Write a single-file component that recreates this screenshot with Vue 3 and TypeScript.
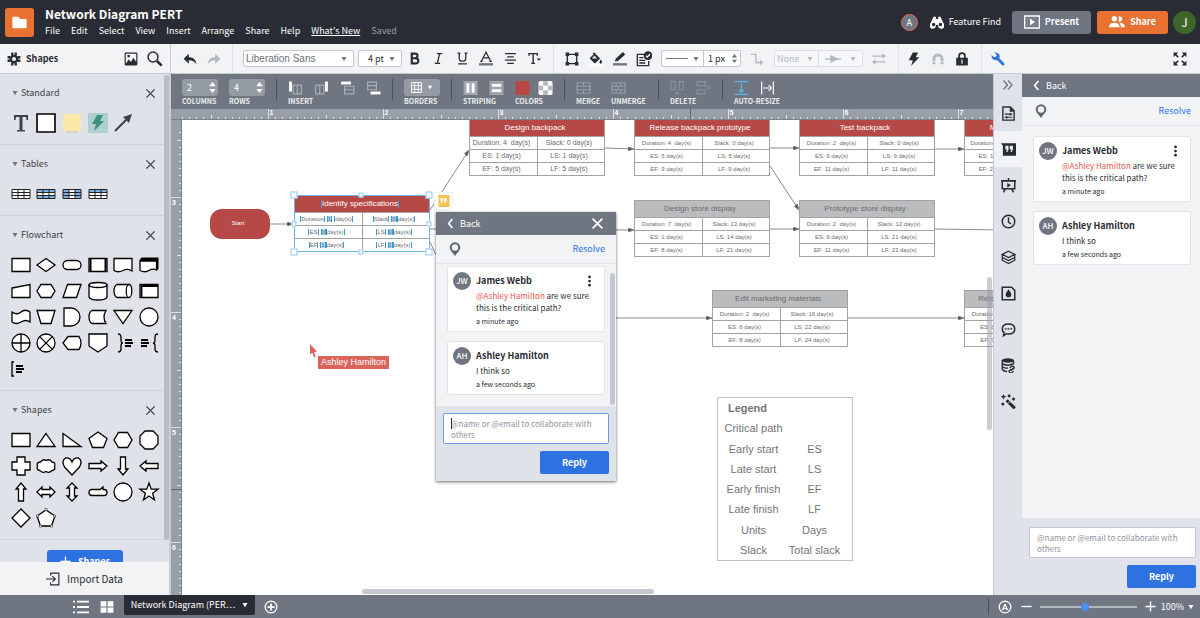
<script setup lang="ts">
import { ref } from 'vue'

interface Cell { parts: string[] }
interface Node { title: string; kind: 'critical' | 'normal'; x: number; y: number; big?: boolean; cells: string[][] }
interface Message { initials: string; name: string; mention?: string; text: string; time: string; menu?: boolean }
interface Tick { pos: number; size: number; label?: string }

const menus = ['File', 'Edit', 'Select', 'View', 'Insert', 'Arrange', 'Share', 'Help']

const icons: Record<string, string> = {
  folder: '<path fill="currentColor" d="M2 5q0-1 1-1h7l3 3h8q1 0 1 1v11q0 1-1 1H3q-1 0-1-1z"/>',
  gear: '<circle cx="12" cy="12" r="5.5" fill="none" stroke="currentColor" stroke-width="4"/><path fill="none" stroke="currentColor" stroke-width="4" d="M9 1v5M15 1v5M9 18v5M15 18v5M1 9h5M1 15h5M18 9h5M18 15h5"/>',
  image: '<path fill="currentColor" fill-rule="evenodd" d="M3 1h18q2 0 2 2v18q0 2-2 2H3q-2 0-2-2V3q0-2 2-2zm0 2v17l5-7 4 4 4-7 5 7V3zM6 5h4v4H6z"/>',
  search: '<circle cx="9" cy="9" r="7.500" fill="none" stroke="currentColor" stroke-width="2.2"/><path fill="none" stroke="currentColor" stroke-width="4" d="m15 15 7 7"/>',
  undo: '<path fill="currentColor" d="M10 3v6c8 0 12 4 13 12-3-5-7-7-13-7v6L1 11.500z"/>',
  redo: '<path fill="currentColor" d="M14 3v6C6 9 2 13 1 21c3-5 7-7 13-7v6l9-8.500z"/>',
  bold: '<path fill="none" stroke="currentColor" stroke-width="4" d="M7 3h6q4.500 0 4.500 4T13 11.500H7h7q5 0 5 4.800T14 21H7zM7 1v22"/>',
  italic: '<path fill="none" stroke="currentColor" stroke-width="2.400" d="M9 3h10M5 21h10M14 3l-4 18"/>',
  underline: '<path fill="none" stroke="currentColor" stroke-width="2.400" d="M3 2h5M16 2h5M6 2v9q0 6 6 6t6-6V2M4 22h16"/>',
  color: '<path fill="none" stroke="currentColor" stroke-width="2.200" d="M4 17 12 1l8 16M7 11h10M2 17h4M18 17h4"/><path fill="#6f7681" d="M0 20h24v4H0z"/>',
  align: '<path fill="none" stroke="currentColor" stroke-width="2.200" d="M2 3h20M6 9h12M2 15h20M6 21h12"/>',
  textmenu: '<path fill="none" stroke="currentColor" stroke-width="2.600" d="M2 7V3h15v4M9.500 3v18M6 21h7"/><path fill="currentColor" d="M16 12h8l-4 4z"/>',
  shapebox: '<path fill="none" stroke="currentColor" stroke-width="2.400" d="M4 4h16v16H4z"/><path fill="currentColor" d="M1 1h6v6H1zM17 1h6v6h-6zM1 17h6v6H1zM17 17h6v6h-6z"/>',
  bucket: '<path fill="currentColor" d="m9 1 10 10-8 8q-1 1-2 0L2 12q-1-1 0-2l6-6-2-2zM20 13q5 6 0 7-4-1 0-7z"/><path fill="#f2f3f5" d="m9 6 5 5H5z"/><path fill="#fff" d="M1 21h22v3H1z"/>',
  pen: '<path fill="currentColor" d="m3 17 2-5L17 1l4 4L9 16z"/><path fill="#6f7681" d="M0 20h24v4H0z"/>',
  listcheck: '<path fill="none" stroke="currentColor" stroke-width="2" d="M12 5H2v17h17v-7M5 10h6M5 14h9M5 18h9"/><circle cx="18" cy="7" r="6.500" fill="currentColor"/><path fill="none" stroke="#fff" stroke-width="2" d="m15 7 2 2 4-4"/>',
  elbow: '<path fill="none" stroke="currentColor" stroke-width="2.400" d="M1 4h9v14h8"/><path fill="currentColor" d="m17 13 6 5-6 5z"/>',
  swap: '<path fill="none" stroke="currentColor" stroke-width="2" d="M1 7h20M3 17h20"/><path fill="currentColor" d="m18 2 6 5-6 5zM6 12l-6 5 6 5z"/>',
  bolt: '<path fill="currentColor" d="M10 1h9l-4 8h6L7 24l3-10H3z"/>',
  magnet: '<path fill="none" stroke="currentColor" stroke-width="5" d="M5 21v-9a7 7 0 0 1 14 0v9"/><path stroke="#f2f3f5" stroke-width="1.500" d="M1 16.500h8M15 16.500h8"/>',
  lock: '<path fill="none" stroke="currentColor" stroke-width="3" d="M7 11V7q0-5 5-5t5 5v4"/><path fill="currentColor" fill-rule="evenodd" d="M2 10h20v13H2zm9 3v7h2v-7z"/>',
  wrench: '<path fill="none" stroke="currentColor" stroke-width="5" stroke-linecap="round" d="m10 10 10.500 10.500"/><path fill="currentColor" d="M1 5 5 9l4-1 1-3L6 1q5-1 8 3 2 4-1 8-4 4-9 1-4-3-3-8z"/>',
  expand: '<path fill="currentColor" d="M1 1h8L6 4l4 4-2 2-4-4-3 3zM23 1v8l-3-3-4 4-2-2 4-4-3-3zM1 23v-8l3 3 4-4 2 2-4 4 3 3zM23 23h-8l3-3-4-4 2-2 4 4 3-3z"/>',
  binoculars: '<path fill="currentColor" fill-rule="evenodd" d="M6 3h4v4h4V3h4l5 11a5.500 5.500 0 1 1-9 3h-4a5.500 5.500 0 1 1-9-3zm.2 10.200a3 3 0 1 0 0 6 3 3 0 0 0 0-6zm11.600 0a3 3 0 1 0 0 6 3 3 0 0 0 0-6z"/>',
  present: '<path fill="none" stroke="currentColor" stroke-width="2" d="M1 3h22v18H1z"/><path fill="none" stroke="currentColor" stroke-width="1" d="M5 7h14v10H5z" opacity=".3"/><path fill="currentColor" d="m9 7 8 5-8 5z"/>',
  people: '<circle cx="8" cy="7" r="4" fill="currentColor"/><path fill="currentColor" d="M0 20q0-7 8-7t8 7zM14 4a4 4 0 1 1 0 7q2-3 0-7zM17 13q7 1 7 7h-6q0-5-3-7z"/>',
  close: '<path fill="none" stroke="currentColor" stroke-width="3" d="m3 3 18 18M21 3 3 21"/>',
  back: '<path fill="none" stroke="currentColor" stroke-width="3.500" d="m16 2-8 10 8 10"/>',
  pin: '<path fill="currentColor" fill-rule="evenodd" d="M12 24C8 18 3 14 3 9.500a9 9 0 0 1 18 0C21 14 16 18 12 24zm0-20a5.500 5.500 0 1 0 0 11 5.500 5.500 0 0 0 0-11z"/>',
  dots: '<circle cx="12" cy="3" r="3" fill="currentColor"/><circle cx="12" cy="12" r="3" fill="currentColor"/><circle cx="12" cy="21" r="3" fill="currentColor"/>',
  chevrons: '<path fill="none" stroke="currentColor" stroke-width="2.600" d="m3 3 8 9-8 9M12 3l8 9-8 9"/>',
  page: '<path fill="none" stroke="currentColor" stroke-width="2.200" d="M3 1.500h12l6 6v15H3z"/><path fill="none" stroke="currentColor" stroke-width="1.800" d="M6 13h12M6 18h12"/><path fill="currentColor" d="M14 2v7h7zM14 11h2v4h-2zM8 16h2v4H8z"/>',
  quotes: '<path fill="currentColor" fill-rule="evenodd" d="M0 2h24v20H3V6zm7 4v6h3l-2 4h2l2-4V6zm7 0v6h3l-2 4h2l2-4V6z"/>',
  slides: '<path fill="none" stroke="currentColor" stroke-width="2.400" d="M2 4v13h20V4M7 17l-3 6M17 17l3 6M12 0v4"/><path fill="currentColor" d="M0 3h24v3H0zM10 8l6 3.500-6 3.500z"/>',
  clock: '<circle cx="12" cy="12" r="10" fill="none" stroke="currentColor" stroke-width="2.400"/><path fill="none" stroke="currentColor" stroke-width="2.400" d="M12 5v8l4 3"/>',
  layers: '<path fill="none" stroke="currentColor" stroke-width="2" d="m12 2 10 5-10 5L2 7zM2 12l10 5 10-5M2 16.500l10 5 10-5M2 7v5M22 7v5M2 12v5M22 12v5"/>',
  theme: '<path fill="none" stroke="currentColor" stroke-width="2.400" d="M2 2h15l5 5v15H2z"/><path fill="currentColor" d="M12 5c2 4 4.500 5 4.500 8.500a4.500 4.500 0 0 1-9 0C7.500 10 10 9 12 5z"/>',
  chat: '<path fill="none" stroke="currentColor" stroke-width="2.400" d="M12 3c6 0 10 3 10 8s-4 8-10 8q-2 0-3-.5L4 22l1-5q-3-2-3-6c0-5 4-8 10-8z"/><path fill="currentColor" d="M6 10h3v2H6zM10.500 10h3v2h-3zM15 10h3v2h-3z"/>',
  data: '<ellipse cx="11" cy="4" rx="10" ry="3.500" fill="currentColor"/><path fill="none" stroke="currentColor" stroke-width="2.200" d="M2 4v14q3 4 8 3.500M20 4v6M2 9q8 5 18 0M2 14q5 3 9 2"/><path fill="none" stroke="currentColor" stroke-width="2.200" d="m16 18-3 3a3 3 0 0 0 4 3l3-3M19 18l2-2a3 3 0 0 0-4-3l-3 3M16 20l4-4"/>',
  wand: '<path stroke="currentColor" stroke-width="5" d="m9 10 13 13"/><path fill="currentColor" d="m4 0 1.500 3L9 4 5.500 5.500 4 9 2.500 5.500-1 4l3.500-1zM13 0l3 3-3 3-3-3zM20 5l3 3-3 3-3-3zM3 13l3 3-3 3-3-3z"/><path stroke="#dfe2e8" stroke-width="1.500" d="m14 12-3 3"/>',
  import: '<path fill="none" stroke="currentColor" stroke-width="2" d="M8 6V2h14v20H8v-4M0 12h15M11 7l5 5-5 5"/>',
  list: '<path fill="none" stroke="currentColor" stroke-width="2.800" d="M0 4h3M6 4h18M0 12h3M6 12h18M0 20h3M6 20h18"/>',
  tiles: '<path fill="currentColor" d="M1 2h10v9H1zM13 2h10v9H13zM1 13h10v9H1zM13 13h10v9H13z"/>',
  addpage: '<circle cx="12" cy="12" r="10" fill="none" stroke="currentColor" stroke-width="2.200"/><path fill="none" stroke="currentColor" stroke-width="3" d="M12 6v12M6 12h12"/>',
  navigator: '<circle cx="12" cy="12" r="10" fill="none" stroke="currentColor" stroke-width="2.200"/><path fill="currentColor" fill-rule="evenodd" d="m12 5 6 13-6-3-6 3zm0 5-2 4 2-1 2 1z"/>',
  minus: '<path fill="none" stroke="currentColor" stroke-width="3" d="M1 12h22"/>',
  plus: '<path fill="none" stroke="currentColor" stroke-width="3" d="M12 1v22M1 12h22"/>',
  caret: '<path fill="currentColor" d="M2 4h20L12 21z"/>',
  spin: '<path fill="currentColor" d="M12 0l7 9H5zM12 24l7-9H5z"/>',
  quoteBadge: '<path fill="#f3c24f" d="M0 0h24v24H2V4z"/><path fill="#fff" d="M6 6h5v6l-2 5H7l1-4H6zM13 6h5v6l-2 5h-2l1-4h-2z"/>',
  arrowline: '<path fill="none" stroke="currentColor" stroke-width="2" d="M0 12h24"/><path fill="currentColor" d="m8 6 13 6-13 6z"/>',
  insertLeft: '<path fill="#fff" d="M1 1h5v17H1z"/><path fill="none" stroke="#a9aeb7" stroke-width="2" d="M8 7h14v15H8zM15 7v15"/>',
  insertRight: '<path fill="#fff" d="M18 1h5v17h-5z"/><path fill="none" stroke="#a9aeb7" stroke-width="2" d="M2 7h14v15H2zM9 7v15"/>',
  insertTop: '<path fill="#fff" d="M1 1h17v5H1z"/><path fill="none" stroke="#a9aeb7" stroke-width="2" d="M7 9h16v13H7zM7 15h16"/>',
  insertBottom: '<path fill="#fff" d="M7 18h17v5H7z"/><path fill="none" stroke="#a9aeb7" stroke-width="2" d="M2 2h15v13H2zM2 8h15"/>',
  grid: '<path fill="none" stroke="#fff" stroke-width="2" d="M1 1h22v22H1zM1 8h22M1 16h22M8 1v22M16 1v22"/>',
  stripeCol: '<path fill="#a0a5af" d="M0 0h24v24H0z"/><path fill="#fff" d="M5 4h5v16H5zM14 4h5v16h-5z"/>',
  stripeRow: '<path fill="#a0a5af" d="M0 0h24v24H0z"/><path fill="#fff" d="M4 5h16v5H4zM4 14h16v5H4z"/>',
  swatch: '<rect width="24" height="24" rx="3" fill="#b94643"/>',
  checker: '<rect width="24" height="24" rx="3" fill="#fff"/><path fill="#b4b8bf" d="M8 0h8v8H8zM0 8h8v8H0zM16 8h8v8h-8zM8 16h8v8H8z"/>',
  merge: '<path fill="none" stroke="#989da7" stroke-width="2" d="M1 3h22v18H1zM1 9h22M1 15h22M12 3v6M12 15v6"/>',
  unmerge: '<path fill="none" stroke="#989da7" stroke-width="2" d="M1 3h22v18H1zM1 9h22M1 15h22M8 3v6M16 3v6M8 15v6M16 15v6M12 9v6"/>',
  deleteCol: '<path fill="none" stroke="#8c929d" stroke-width="2" d="M1 1h7v14H1zM15 1h7v14h-7zM9 18l5 5M14 18l-5 5"/>',
  deleteRow: '<path fill="none" stroke="#8c929d" stroke-width="2" d="M1 1h14v7H1zM1 15h14v7H1zM18 9l5 5M23 9l-5 5"/>',
  fitHeight: '<path fill="none" stroke="#5bb5f0" stroke-width="2" d="M0 1h24M0 23h24M12 3v16M8 15l4 4 4-4"/>',
  fitWidth: '<path fill="none" stroke="#fff" stroke-width="2" d="M2 1v22M22 1v22M4 12h15M14 7l5 5-5 5"/>',
}

const cell = (d: string) => `<path d="${d}"/>`
const lines = (x: number) => `<path fill="none" stroke-width="1.800" d="M${x} -3h7M${x} 0h8M${x} 3h6"/>`
const standard = [
  '<path fill="#3d4148" stroke="none" d="M-7-8H7v5H5.500L5-6H1.500V7H4v1.500h-8V7h2.500V-6H-5l-.5 3H-7z"/>',
  '<path stroke-width="1.600" d="M-9-9H9V9H-9z"/>',
  '<path fill="#d5cdb2" stroke="none" d="M-6 7H6v2.500H-6z"/><path fill="#fde8ab" stroke="none" d="M-9-9H9V8H-9z"/>',
  '<path fill="#afd0cc" stroke="none" d="M-10-10h20v20h-20z"/><path fill="#3b8f83" stroke="none" d="M-1-8h6L2-2h4L-4 8l2-7h-4z"/>',
  '<path fill="none" stroke="#3d4148" stroke-width="2" d="M-8 8 4-4"/><path fill="#3d4148" stroke="none" d="M9-9 6 0 0-6z"/>',
]
const tableGrid = '<path fill="none" stroke="#222" stroke-width="1" d="M-9-4.500H9v9H-9zM-9-1.500H9M-9 1.500H9M-3-4.500v9M3-4.500v9"/>'
const tableBg = '<path stroke="none" d="M-9-4.500H9v9H-9z"/>'
const tables = [
  tableBg + tableGrid,
  tableBg + '<path fill="#83b0e2" stroke="none" d="M-9-4.500H9v3H-9zM-9 1.500H9v3H-9z"/>' + tableGrid,
  tableBg + '<path fill="#83b0e2" stroke="none" d="M-9-4.500h6v9h-6zM3-4.500h6v9H3z"/>' + tableGrid,
  tableBg + '<path fill="#83b0e2" stroke="none" d="M-9-4.500H9v3H-9z"/>' + tableGrid,
]
const flowchart = [
  cell('M-9-6.500H9v13H-9z'),
  cell('M-9 0 0-6.500 9 0 0 6.500z'),
  '<rect x="-9" y="-4.500" width="18" height="9" rx="4.500"/>',
  '<path d="M-9-6.500H9v13H-9z"/><path stroke-width="2" d="M-7.500-6v12M7.500-6v12"/>',
  cell('M-9-6.500H9V6Q5 3 0 5.500T-9 5.500z'),
  '<path fill="#000" stroke="none" d="M-9.500-5l2-2.500h17V4l-2 1.500z"/><path d="M-9-4H7.500V5Q4 3 0 5.500T-9 5.500z"/>',
  cell('M-9-3 9-6.500v13H-9z'),
  cell('M-5-6.500H5L9 0 5 6.500H-5L-9 0z'),
  cell('M-4.500-6.500H9l-4.500 13H-9z'),
  '<path d="M-9-6V6Q-8 9 0 9T9 6V-6z"/><ellipse cy="-6" rx="9" ry="2.500"/>',
  '<path d="M6-6.500H-6Q-9-5-9 0t3 6.500H6z"/><ellipse cx="6" rx="2.800" ry="6.500"/>',
  '<path d="M-9-6.500H9v13H-9z"/><path fill="none" stroke-width="1.800" d="M-7.500 6V-5H9"/>',
  cell('M-9-5q5 3.500 9 0t9 0V5Q5 2 0 5t-9 0z'),
  cell('M-9-6.500H9l-4 13H-5z'),
  cell('M-8-9h7a9 9 0 0 1 0 18h-7z'),
  cell('M-6-6.500H8q-4 6.500 0 13H-6Q-9 5-9 0t3-6.500z'),
  cell('M-9-6.500H9L0 6.500z'),
  '<circle r="9"/>',
  '<circle r="9"/><path d="M-9 0H9M0-9V9"/>',
  '<circle r="9"/><path d="m-6.400-6.400 12.800 12.800M6.400-6.400-6.400 6.400"/>',
  cell('M-4-6.500H7q4 6.500 0 13H-4L-9 0z'),
  cell('M-9-9H9V3L0 9-9 3z'),
  '<path fill="none" d="M-5-9q3 0 3 3v3q0 3 2 3-2 0-2 3v3q0 3-3 3"/>' + lines(2),
  lines(-8) + '<path fill="none" d="M9-9Q6-9 6-6v3q0 3-2 3 2 0 2 3v3q0 3 3 3"/>',
  '<path fill="none" d="M-7-7h-2V7h2"/>' + lines(-5),
]
const shapes = [
  cell('M-9-6.500H9v13H-9z'),
  cell('M0-6.500 9 6.500H-9z'),
  cell('M-9-6.500 9 6.500H-9z'),
  cell('M0-8 9-1.500 5.500 7.500h-11L-9-1.500z'),
  cell('M-4.500-7.500h9L9 0 4.500 7.500h-9L-9 0z'),
  cell('M-4-9h8l5 5v8L4 9h-8l-5-5v-8z'),
  cell('M-4-9h8v5h5v8H4v5h-8V4h-5v-8h5z'),
  cell('M-5.500-4Q-3-7.500 0-5.500 4-7.500 6-4q4 .5 2.500 4Q10 4 6 4.500 3 7.500 0 5.500q-4 2-6-1Q-10 4-8.500 0-10-3.500-5.500-4z'),
  cell('M0 9-7.500 1q-3.500-6 1-9 4.500-1 6.500 4 2-5 6.500-4 4.500 3 1 9z'),
  cell('M-9-2.500H3V-5l6 5-6 5V2.500H-9z'),
  cell('M-2.500-9h5V3H5L0 9l-5-6h2.500z'),
  cell('M9-2.500H-3V-5l-6 5 6 5V2.500H9z'),
  cell('M-2.500 9h5V-3H5L0-9l-5 6h2.500z'),
  cell('M-9 0-4-5v2.500h8V-5L9 0 4 5V2.500h-8V5z'),
  cell('M0-9 5-4H2.500v8H5L0 9l-5-5h2.500v-8H-5z'),
  cell('M-6-2.500H2L5-5v2.500h1q3 0 3 3t-3 3H-6q-3 0-3-3t3-3z'),
  '<circle r="9"/>',
  cell('M0-9l2.200 6.200H9L3.600 1.200 5.500 8 0 4-5.500 8l1.900-6.800L-9-2.800h6.800z'),
  cell('M0-9 9 0 0 9-9 0z'),
  '<path d="M0-8 9-2 5.500 8h-11L-9-2z"/><path stroke="#555" stroke-width=".8" d="M-1-9.500h2v2h-2zM7.500-3h2v2h-2zM-9.500-3h2v2h-2zM-6.500 7h2v2h-2zM4.500 7h2v2h-2z"/>',
]
const sections = [
  { name: 'Standard', items: standard },
  { name: 'Tables', items: tables },
  { name: 'Flowchart', items: flowchart },
  { name: 'Shapes', items: shapes },
]

const make = (a: string[]): string[][] => [[a[0], a[1]], [a[2], a[3]], [a[4], a[5]]]
const nodes: Node[] = [
  { title: 'Design backpack', kind: 'critical', x: 287, y: -1, big: true, cells: make(['Duration: 4 \u00a0day(s)', 'Slack: 0 day(s)', 'ES: 1 day(s)', 'LS: 1 day(s)', 'EF: 5 day(s)', 'LF: 5 day(s)']) },
  { title: 'Release backpack prototype', kind: 'critical', x: 452, y: -1, cells: make(['Duration: 4 \u00a0day(s)', 'Slack: 0 day(s)', 'ES: 5 day(s)', 'LS: 5 day(s)', 'EF: 9 day(s)', 'LF: 9 day(s)']) },
  { title: 'Test backpack', kind: 'critical', x: 617, y: -1, cells: make(['Duration: 2 \u00a0day(s)', 'Slack: 0 day(s)', 'ES: 9 day(s)', 'LS: 9 day(s)', 'EF: 11 day(s)', 'LF: 11 day(s)']) },
  { title: 'Manufacture backpack', kind: 'critical', x: 782, y: -1, cells: make(['Duration: 14 \u00a0day(s)', 'Slack: 0 day(s)', 'ES: 11 day(s)', 'LS: 11 day(s)', 'EF: 25 day(s)', 'LF: 25 day(s)']) },
  { title: 'Design store display', kind: 'normal', x: 452, y: 80, cells: make(['Duration: 7 \u00a0day(s)', 'Slack: 13 day(s)', 'ES: 1 day(s)', 'LS: 14 day(s)', 'EF: 8 day(s)', 'LF: 21 day(s)']) },
  { title: 'Prototype store display', kind: 'normal', x: 617, y: 80, cells: make(['Duration: 2 \u00a0day(s)', 'Slack: 12 day(s)', 'ES: 9 day(s)', 'LS: 21 day(s)', 'EF: 11 day(s)', 'LF: 23 day(s)']) },
  { title: 'Edit marketing materials', kind: 'normal', x: 530, y: 170, cells: make(['Duration: 2 \u00a0day(s)', 'Slack: 16 day(s)', 'ES: 6 day(s)', 'LS: 22 day(s)', 'EF: 8 day(s)', 'LF: 24 day(s)']) },
  { title: 'Release marketing campaign', kind: 'normal', x: 782, y: 170, cells: make(['Duration: 1 \u00a0day(s)', 'Slack: 16 day(s)', 'ES: 8 day(s)', 'LS: 24 day(s)', 'EF: 9 day(s)', 'LF: 25 day(s)']) },
]
const selected: Cell[][] = [
  [{ parts: ['Duration', '1', 'day(s)'] }, { parts: ['Slack', '0', 'day(s)'] }],
  [{ parts: ['ES', '0', 'day(s)'] }, { parts: ['LS', '0', 'day(s)'] }],
  [{ parts: ['EF', '1', 'day(s)'] }, { parts: ['LF', '1', 'day(s)'] }],
]
const links = [
  'M88 104H111', 'M248 90 287 30', 'M248 109 452 110', 'M248 122 254 135', 'M434 198H530',
  'M423 28 452 29', 'M588 28H617', 'M588 46 617 90', 'M588 109H617', 'M753 29H782', 'M753 109 820 110', 'M666 198H782',
]
const handles = [
  [0, 0, 7], [135, 0, 7], [0, 57, 7], [135, 57, 7],
  [67, 0, 5], [67, 57, 5], [0, 29, 5], [135, 29, 5],
]
const legend = [
  ['Critical path', ''], ['Early start', 'ES'], ['Late start', 'LS'], ['Early finish', 'EF'],
  ['Late finish', 'LF'], ['Units', 'Days'], ['Slack', 'Total slack'],
]

function ruler(first: number, start: number, count: number): Tick[] {
  const out: Tick[] = []
  for (let k = -16; k < count * 16; k++) {
    const major = k % 16 === 0
    const pos = start + (k * 115) / 16
    if (pos < 8) continue
    out.push({ pos: Math.round(pos) + 0.5, size: major ? 11 : k % 8 === 0 ? 5 : 3, label: major ? String(first + k / 16) : undefined })
  }
  return out
}
const across = ruler(1, 97, 16)
const down = ruler(3, 77, 12)

const messages: Message[] = [
  { initials: 'JW', name: 'James Webb', mention: '@Ashley Hamilton', text: ' are we sure this is the critical path?', time: 'a minute ago', menu: true },
  { initials: 'AH', name: 'Ashley Hamilton', text: 'I think so', time: 'a few seconds ago' },
]
const dock = ['page', 'quotes', 'slides', 'clock', 'layers', 'theme', 'chat', 'data', 'wand']
const placeholder = '@name or @email to collaborate with others'

const popupOpen = ref(true)
const popupDraft = ref('')
const panelDraft = ref('')
const columns = ref(2)
const rows = ref(4)
const lineWidth = ref('1 px')
const zoom = ref(46)
</script>

<template>
  <div class="app">
    <header class="top">
      <div class="logo"><svg viewBox="0 0 24 24" v-html="icons.folder" /></div>
      <div class="heading">
        <h1>Network Diagram PERT</h1>
        <nav class="menus">
          <button v-for="m in menus" :key="m" type="button">{{ m }}</button>
          <a href="#whats-new">What's New</a>
          <span class="saved">Saved</span>
        </nav>
      </div>
      <span class="collab">A</span>
      <button class="find" type="button"><svg viewBox="0 0 24 24" v-html="icons.binoculars" />Feature Find</button>
      <button class="action present" type="button"><svg viewBox="0 0 24 24" v-html="icons.present" />Present</button>
      <button class="action share" type="button"><svg viewBox="0 0 24 24" v-html="icons.people" />Share</button>
      <button class="me" type="button">J</button>
    </header>

    <div class="toolbar">
      <div class="group shapes-head">
        <svg viewBox="0 0 24 24" v-html="icons.gear" />
        <h2>Shapes</h2>
        <button type="button" class="slot" aria-label="Images"><svg viewBox="0 0 24 24" v-html="icons.image" /></button>
        <button type="button" class="slot" aria-label="Search shapes"><svg class="i16" viewBox="0 0 24 24" v-html="icons.search" /></button>
      </div>
      <div class="group history">
        <button type="button" class="slot" aria-label="Undo"><svg viewBox="0 0 24 24" v-html="icons.undo" /></button>
        <button type="button" class="slot off" aria-label="Redo"><svg viewBox="0 0 24 24" v-html="icons.redo" /></button>
      </div>
      <div class="group text-tools">
        <label class="pick font"><select aria-label="Font"><option>Liberation Sans</option></select><svg viewBox="0 0 24 24" v-html="icons.caret" /></label>
        <label class="pick size"><select aria-label="Font size"><option>4 pt</option></select><svg viewBox="0 0 24 24" v-html="icons.caret" /></label>
        <div class="slots">
          <button v-for="n in ['bold', 'italic', 'underline', 'color', 'align', 'textmenu']" :key="n" type="button" class="slot" :class="n" :aria-label="n"><svg viewBox="0 0 24 24" v-html="icons[n]" /></button>
        </div>
      </div>
      <div class="group line-tools">
        <div class="slots">
          <button v-for="n in ['shapebox', 'bucket', 'pen', 'listcheck']" :key="n" type="button" class="slot" :class="n" :aria-label="n"><svg viewBox="0 0 24 24" v-html="icons[n]" /></button>
        </div>
        <div class="joined">
          <button type="button" class="line-style" aria-label="Line style"><i /><svg viewBox="0 0 24 24" v-html="icons.caret" /></button>
          <label class="stepper"><input v-model="lineWidth" aria-label="Line width" /><svg viewBox="0 0 24 24" v-html="icons.spin" /></label>
        </div>
        <button type="button" class="slot off" aria-label="Line shape"><svg viewBox="0 0 24 24" v-html="icons.elbow" /></button>
        <div class="joined off ends">
          <label class="pick none"><select disabled aria-label="Line start"><option>None</option></select><svg viewBox="0 0 24 24" v-html="icons.caret" /></label>
          <button type="button" class="line-end" disabled aria-label="Line end"><svg class="i16" viewBox="0 0 24 24" v-html="icons.arrowline" /><svg viewBox="0 0 24 24" v-html="icons.caret" /></button>
        </div>
        <button type="button" class="slot off" aria-label="Swap ends"><svg viewBox="0 0 24 24" v-html="icons.swap" /></button>
      </div>
      <div class="group lock-tools">
        <button type="button" class="slot" aria-label="Actions"><svg viewBox="0 0 24 24" v-html="icons.bolt" /></button>
        <button type="button" class="slot off" aria-label="Magnetize"><svg viewBox="0 0 24 24" v-html="icons.magnet" /></button>
        <button type="button" class="slot" aria-label="Lock"><svg viewBox="0 0 24 24" v-html="icons.lock" /></button>
      </div>
      <div class="group wrench-tools">
        <button type="button" class="slot wrench" aria-label="Manage"><svg viewBox="0 0 24 24" v-html="icons.wrench" /></button>
        <button type="button" class="slot" aria-label="Full screen"><svg viewBox="0 0 24 24" v-html="icons.expand" /></button>
      </div>
    </div>

    <main class="work">
      <aside class="library">
        <div class="library-list">
          <section v-for="s in sections" :key="s.name">
            <header>
              <svg class="fold" viewBox="0 0 24 24" v-html="icons.caret" />
              <h3>{{ s.name }}</h3>
              <button type="button" :aria-label="'Close ' + s.name"><svg viewBox="0 0 24 24" v-html="icons.close" /></button>
            </header>
            <div class="shape-grid">
              <svg v-for="(shape, i) in s.items" :key="i" viewBox="-10 -10 20 20" v-html="shape" />
            </div>
          </section>
          <button type="button" class="more"><svg viewBox="0 0 24 24" v-html="icons.plus" />Shapes</button>
          <i class="library-bar" />
        </div>
        <button type="button" class="import"><svg viewBox="0 0 24 24" v-html="icons.import" />Import Data</button>
      </aside>

      <section class="stage">
        <div class="table-tools">
          <div class="tool">
            <label class="count"><input v-model="columns" aria-label="Columns" /><svg viewBox="0 0 24 24" v-html="icons.spin" /></label>
            <span>COLUMNS</span>
          </div>
          <div class="tool">
            <label class="count"><input v-model="rows" aria-label="Rows" /><svg viewBox="0 0 24 24" v-html="icons.spin" /></label>
            <span>ROWS</span>
          </div>
          <i class="bar" />
          <div class="tool">
            <div class="set"><svg v-for="n in ['insertLeft', 'insertRight', 'insertTop', 'insertBottom']" :key="n" viewBox="0 0 24 24" v-html="icons[n]" /></div>
            <span>INSERT</span>
          </div>
          <i class="bar" />
          <div class="tool">
            <button type="button" class="count borders" aria-label="Borders"><svg viewBox="0 0 24 24" v-html="icons.grid" /><svg class="tiny" viewBox="0 0 24 24" v-html="icons.caret" /></button>
            <span>BORDERS</span>
          </div>
          <i class="bar" />
          <div class="tool">
            <div class="set"><svg v-for="n in ['stripeCol', 'stripeRow']" :key="n" viewBox="0 0 24 24" v-html="icons[n]" /></div>
            <span>STRIPING</span>
          </div>
          <div class="tool near">
            <div class="set"><svg v-for="n in ['swatch', 'checker']" :key="n" viewBox="0 0 24 24" v-html="icons[n]" /></div>
            <span>COLORS</span>
          </div>
          <i class="bar" />
          <div class="tool narrow">
            <div class="set"><svg viewBox="0 0 24 24" v-html="icons.merge" /></div>
            <span>MERGE</span>
          </div>
          <div class="tool wide">
            <div class="set"><svg viewBox="0 0 24 24" v-html="icons.unmerge" /></div>
            <span>UNMERGE</span>
          </div>
          <i class="bar" />
          <div class="tool">
            <div class="set"><svg v-for="n in ['deleteCol', 'deleteRow']" :key="n" viewBox="0 0 24 24" v-html="icons[n]" /></div>
            <span>DELETE</span>
          </div>
          <i class="bar" />
          <div class="tool">
            <div class="set"><svg v-for="n in ['fitHeight', 'fitWidth']" :key="n" viewBox="0 0 24 24" v-html="icons[n]" /></div>
            <span>AUTO-RESIZE</span>
          </div>
        </div>

        <svg class="ruler-x">
          <g v-for="t in across" :key="t.pos">
            <line :x1="t.pos" :x2="t.pos" :y1="11 - t.size" y2="11" />
            <text v-if="t.label" :x="t.pos + 1" y="6">{{ t.label }}</text>
          </g>
          <line class="mark" x1="519.500" x2="519.500" y1="0" y2="11" />
        </svg>

        <div class="sheet">
          <svg class="ruler-y">
            <g v-for="t in down" :key="t.pos">
              <line :y1="t.pos" :y2="t.pos" :x1="11 - t.size" x2="11" />
              <text v-if="t.label" x="1" :y="t.pos + 7">{{ t.label }}</text>
            </g>
            <line class="mark" y1="369.500" y2="369.500" x1="0" x2="11" />
          </svg>

          <div class="canvas">
            <svg class="links">
              <defs>
                <marker id="tip" markerWidth="6" markerHeight="4" refX="6" refY="2" orient="auto" markerUnits="userSpaceOnUse">
                  <path d="M0 0 6 2 0 4z" fill="#4a4a4a" />
                </marker>
              </defs>
              <path v-for="(l, i) in links" :key="i" :d="l" :marker-end="i === 3 ? undefined : 'url(#tip)'" />
            </svg>

            <div class="start">Start</div>

            <table v-for="n in nodes" :key="n.title" class="node" :class="[n.kind, { big: n.big }]" :style="{ left: n.x + 'px', top: n.y + 'px' }">
              <thead><tr><th colspan="2">{{ n.title }}</th></tr></thead>
              <tbody>
                <tr v-for="(r, i) in n.cells" :key="i"><td v-for="c in r" :key="c">{{ c }}</td></tr>
              </tbody>
            </table>

            <div class="picked">
              <table class="node critical">
                <thead><tr><th colspan="2"><span class="token">Identify specifications</span></th></tr></thead>
                <tbody>
                  <tr v-for="(r, i) in selected" :key="i">
                    <td v-for="(c, j) in r" :key="j"><span v-for="(p, k) in c.parts" :key="k" class="token" :class="{ value: k === 1, gap: k === 1 || (i === 0 && j === 0 && k > 0) }">{{ p }}</span></td>
                  </tr>
                </tbody>
              </table>
              <i v-for="(h, i) in handles" :key="i" class="handle" :style="{ left: h[0] + 'px', top: h[1] + 'px', width: h[2] + 'px', height: h[2] + 'px' }" />
            </div>

            <div class="note-badge"><svg viewBox="0 0 24 24" v-html="icons.quoteBadge" /></div>

            <div class="pointer">
              <svg viewBox="0 0 12 24"><path d="M0 0v18l4-3 3 8 3-1-3-8 5-1z" fill="#d9645c" /></svg>
              <span>Ashley Hamilton</span>
            </div>

            <table class="legend">
              <tbody>
                <tr><th>Legend</th><td /></tr>
                <tr v-for="l in legend" :key="l[0]"><td>{{ l[0] }}</td><td>{{ l[1] }}</td></tr>
              </tbody>
            </table>

            <div v-if="popupOpen" class="thread popup">
              <header class="thread-head">
                <button type="button"><svg viewBox="0 0 24 24" v-html="icons.back" />Back</button>
                <button type="button" class="dismiss" aria-label="Close" @click="popupOpen = false"><svg viewBox="0 0 24 24" v-html="icons.close" /></button>
              </header>
              <div class="thread-bar">
                <svg viewBox="0 0 24 24" v-html="icons.pin" />
                <button type="button">Resolve</button>
              </div>
              <div class="thread-list">
                <article v-for="m in messages" :key="m.name">
                  <span class="avatar">{{ m.initials }}</span>
                  <div>
                    <h4>{{ m.name }}</h4>
                    <p><b v-if="m.mention">{{ m.mention }}</b>{{ m.text }}</p>
                    <time>{{ m.time }}</time>
                  </div>
                  <button v-if="m.menu" type="button" aria-label="Comment menu"><svg viewBox="0 0 24 24" v-html="icons.dots" /></button>
                </article>
                <i class="thread-scroll" />
              </div>
              <form class="compose" @submit.prevent>
                <div class="field active"><textarea v-model="popupDraft" rows="2" :placeholder="placeholder" aria-label="Comment" /></div>
                <button type="submit">Reply</button>
              </form>
            </div>

            <i class="scroll-x" />
            <i class="scroll-y" />
          </div>
        </div>
      </section>

      <nav class="dock">
        <button type="button" class="collapse" aria-label="Collapse"><svg viewBox="0 0 24 24" v-html="icons.chevrons" /></button>
        <button v-for="d in dock" :key="d" type="button" :class="{ current: d === 'quotes' }" :aria-label="d"><svg viewBox="0 0 24 24" v-html="icons[d]" /></button>
      </nav>

      <aside class="thread side">
        <header class="thread-head">
          <button type="button"><svg viewBox="0 0 24 24" v-html="icons.back" />Back</button>
        </header>
        <div class="thread-bar">
          <svg viewBox="0 0 24 24" v-html="icons.pin" />
          <button type="button">Resolve</button>
        </div>
        <div class="thread-list">
          <article v-for="m in messages" :key="m.name">
            <span class="avatar">{{ m.initials }}</span>
            <div>
              <h4>{{ m.name }}</h4>
              <p><b v-if="m.mention">{{ m.mention }}</b>{{ m.text }}</p>
              <time>{{ m.time }}</time>
            </div>
            <button v-if="m.menu" type="button" aria-label="Comment menu"><svg viewBox="0 0 24 24" v-html="icons.dots" /></button>
          </article>
        </div>
        <form class="compose" @submit.prevent>
          <div class="field"><textarea v-model="panelDraft" rows="2" :placeholder="placeholder" aria-label="Comment" /></div>
          <button type="submit">Reply</button>
        </form>
      </aside>
    </main>

    <footer class="bottom">
      <button type="button" class="slot list" aria-label="Page list"><svg class="i16" viewBox="0 0 24 24" v-html="icons.list" /></button>
      <button type="button" class="slot" aria-label="Page tiles"><svg viewBox="0 0 24 24" v-html="icons.tiles" /></button>
      <button type="button" class="tab">Network Diagram (PER…<svg viewBox="0 0 24 24" v-html="icons.caret" /></button>
      <button type="button" class="slot add" aria-label="Add page"><svg viewBox="0 0 24 24" v-html="icons.addpage" /></button>
      <i class="bar" />
      <button type="button" class="slot" aria-label="Navigator"><svg viewBox="0 0 24 24" v-html="icons.navigator" /></button>
      <button type="button" class="slot thin" aria-label="Zoom out"><svg viewBox="0 0 24 24" v-html="icons.minus" /></button>
      <input v-model="zoom" type="range" min="0" max="100" aria-label="Zoom" />
      <button type="button" class="slot thin" aria-label="Zoom in"><svg viewBox="0 0 24 24" v-html="icons.plus" /></button>
      <button type="button" class="percent">100%<svg viewBox="0 0 24 24" v-html="icons.caret" /></button>
    </footer>
  </div>
</template>

<style>
body { margin: 0; }
</style>

<style scoped>
.app {
  display: flex; flex-direction: column; height: 100vh; overflow: hidden;
  font-family: "Noto Sans CJK SC", "Open Sans", sans-serif; font-size: 9px; line-height: 14px; color: #282c33;
}
.app * { box-sizing: border-box; }
button, input, select, textarea { font: inherit; color: inherit; }
button { display: flex; align-items: center; justify-content: center; margin: 0; padding: 0; border: 0; background: none; white-space: nowrap; }
h1, h2, h3, h4, p { margin: 0; font-size: inherit; font-weight: inherit; }
svg { display: block; flex: none; width: 14px; height: 14px; }
svg.i16 { width: 16px; height: 16px; }

.top { display: flex; align-items: center; flex: none; height: 44px; padding: 0 4px 0 5px; background: #292c34; color: #fff; }
.logo { display: flex; align-items: center; justify-content: center; width: 29px; height: 29px; border-radius: 3px; background: #e97232; }
.logo svg { width: 17px; height: 17px; }
.heading { flex: 1; margin-left: 11px; }
.heading h1 { font-size: 12px; line-height: 18px; font-weight: 700; }
.menus { display: flex; gap: 11px; line-height: 16px; }
.menus a { color: inherit; text-decoration: underline; }
.saved { color: #989da6; }
.collab { width: 17px; height: 17px; border: 1px solid #e2665e; border-radius: 50%; background: #6f7681; text-align: center; line-height: 15px; }
.find { margin: 0 11px 0 12px; gap: 5px; }
.action { height: 23px; border-radius: 3px; font-weight: 700; gap: 5px; }
.present { width: 79px; background: #6f7681; }
.present svg, .share svg { width: 16px; height: 16px; }
.share { width: 71px; margin-left: 6px; background: #e97232; }
.me { width: 23px; height: 23px; margin-left: 5px; border-radius: 50%; background: #3f662a; font-size: 12px; }

.toolbar { display: flex; flex: none; height: 30px; background: #f2f3f5; border-bottom: 1px solid #c6cad1; }
.group { display: flex; align-items: center; border-right: 1px solid #dfe2e7; }
.slot { width: 24px; height: 24px; flex: none; }
.slots { display: flex; }
.off { color: #b4b8bf; }
.shapes-head { width: 171px; padding: 0 3px 0 7px; border-color: #c6cad1; }
.shapes-head h2 { flex: 1; margin-left: 5px; font-weight: 700; }
.history { padding: 0 6px 0 7px; }
.text-tools { padding: 0 7px 0 10px; }
.text-tools .slot svg { width: 13px; height: 13px; }
.text-tools .slot.color svg, .line-tools .slot.pen svg { width: 14px; height: 17px; }
.pick { position: relative; display: flex; align-items: center; height: 17px; border: 1px solid #c4c8cf; border-radius: 2px; background: #fff; }
.pick select { appearance: none; width: 100%; height: 15px; padding: 0 0 0 2px; border: 0; outline: 0; background: none; line-height: 15px; }
.pick svg { position: absolute; right: 6px; width: 6px; height: 6px; color: #6f7681; }
.font { width: 111px; }
.font select { font: 10px/15px "Liberation Sans", sans-serif; color: #6a6e75; }
.size { width: 44px; margin-left: 4px; }
.size select { padding-left: 9px; }
.line-tools { padding: 0 7px 0 6px; }
.line-tools .slot.listcheck svg { width: 16px; height: 16px; }
.joined { display: flex; margin: 0 4px 0 5px; height: 17px; border: 1px solid #c4c8cf; border-radius: 2px; background: #fff; }
.line-style { width: 42px; gap: 5px; border-right: 1px solid #c4c8cf; color: #6f7681; }
.line-style i { width: 22px; height: 1px; background: #6f7681; }
.line-style svg, .line-end svg:last-child { width: 6px; height: 6px; }
.stepper { display: flex; align-items: center; width: 36px; color: #282c33; }
.stepper input { width: 26px; padding: 0 0 0 4px; border: 0; background: none; outline: 0; }
.stepper svg { width: 9px; height: 11px; color: #6f7681; }
.ends { border-color: #dcdfe4; background: #f6f7f8; }
.ends .pick { width: 44px; border: 0; border-right: 1px solid #dcdfe4; border-radius: 0; background: none; height: 15px; }
.ends .pick select { opacity: 1; color: #b4b8bf; }
.ends .pick svg { color: #b4b8bf; right: 5px; }
.line-end { width: 43px; gap: 9px; color: #b4b8bf; }
.lock-tools { padding: 0 7px 0 3px; }
.wrench-tools { flex: 1; justify-content: space-between; padding: 0 8px 0 4px; border: 0; }
.wrench { color: #2d72e0; }

.work { display: grid; grid-template-columns: 171px minmax(0, 1fr) 29px 178px; grid-template-rows: minmax(0, 1fr); flex: 1; min-height: 0; }
.library { display: flex; flex-direction: column; min-height: 0; border-right: 2px solid #c9cdd5; background: #dfe2e8; }
.library-list { position: relative; flex: 1; min-height: 0; overflow: hidden; }
.library section { padding-bottom: 8px; border-bottom: 1px solid #cdd1d9; }
.library section header { display: flex; align-items: center; height: 36px; padding: 2px 12px 0; color: #3d4148; }
.library h3 { flex: 1; margin-left: 3px; }
.fold { width: 6px; height: 6px; color: #6f7681; }
.library section button svg { width: 11px; height: 11px; margin-right: 1px; }
.shape-grid { display: grid; grid-template-columns: repeat(6, 1fr); grid-auto-rows: 26px; align-items: center; justify-items: center; padding: 0 7px 0 8px; }
.shape-grid svg { width: 20px; height: 20px; overflow: visible; fill: #fff; stroke: #000; stroke-width: 1.3; }
.more { width: 76px; height: 23px; margin: 10px 0 0 47px; gap: 7px; border-radius: 3px; background: #2d72e0; color: #fff; font-weight: 700; }
.more svg { width: 11px; height: 11px; }
.library-bar { position: absolute; right: 0; top: 1px; width: 5px; height: 465px; border-radius: 3px; background: #b7bcc6; }
.import { height: 33px; flex: none; gap: 7px; background: #f2f3f5; font-size: 10px; }

.stage { display: flex; flex-direction: column; min-width: 0; }
.table-tools { display: flex; flex: none; height: 35px; padding: 5px 0 0 11px; gap: 11px; overflow: hidden; background: #6f7681; color: #fff; }
.tool { flex: none; }
.tool > span { display: block; width: 0; white-space: nowrap; font-size: 7px; line-height: 11px; font-weight: 700; color: #eceef0; }
.tool .set { display: flex; align-items: center; gap: 11px; height: 17px; }
.tool .set svg { width: 15px; height: 14px; }
.tool.near .set { gap: 8px; }
.narrow { width: 24px; }
.wide { width: 36px; }
.count { display: flex; align-items: center; width: 36px; height: 17px; border-radius: 3px; background: #959ba5; }
.count input { flex: 1; width: 20px; min-width: 0; padding: 0 0 0 5px; border: 0; outline: 0; background: none; }
.count svg { width: 11px; height: 11px; }
.borders { gap: 5px; }
.count .tiny { width: 6px; height: 5px; }
.bar { flex: none; width: 1px; height: 21px; background: #4b515b; }
.ruler-x { width: 100%; height: 11px; background: #989ea8; border-bottom: 1px solid #7b818c; }
.ruler-y { width: 11px; height: 100%; background: #989ea8; border-right: 1px solid #7b818c; }
.ruler-x line, .ruler-y line { stroke: #dcdfe3; stroke-width: 1; }
.ruler-x .mark, .ruler-y .mark { stroke: #5f6570; }
.ruler-x text, .ruler-y text { fill: #fff; font: bold 7px "Liberation Sans", sans-serif; }
.sheet { display: flex; flex: 1; min-height: 0; }
.canvas { position: relative; flex: 1; min-width: 0; overflow: hidden; background: #fff; font-family: "Liberation Sans", sans-serif; }
.links { position: absolute; left: 0; top: 0; width: 100%; height: 100%; fill: none; stroke: #8b8b8b; stroke-width: 1; }
.start { position: absolute; left: 28px; top: 89px; width: 60px; height: 30px; padding-right: 4px; border-radius: 12px; background: #b64946; color: #fff; text-align: center; font-size: 6px; line-height: 28px; }
.node { position: absolute; width: 136px; table-layout: fixed; border: 1px solid #a2a2a2; border-spacing: 0; background: #fff; color: #6b6b6b; text-align: center; font-size: 6px; line-height: 8px; white-space: nowrap; }
.node.big { font-size: 7px; }
.node th { height: 16px; padding: 0 4px 0 0; font-size: 8px; font-weight: 400; }
.node td { height: 13px; padding: 0 4px 0 0; border-top: 1px solid #a2a2a2; }
.node td + td { border-left: 1px solid #a2a2a2; }
.critical th { background: #b64946; color: #fff; }
.normal th { background: #bbbcbe; color: #6b6c6e; }
.picked { position: absolute; left: 112px; top: 75px; }
.picked .node { position: static; border-color: #6cb4e6; }
.token { border: solid #3c9cd8; border-width: 0 1px; }
.token.value { background: #a9d6f3; }
.token.gap { margin-left: 2px; }
.handle { position: absolute; transform: translate(-50%, -50%); border: 1px solid #8fc6ec; background: #fff; }
.note-badge { position: absolute; left: 252px; top: 72px; padding: 2px; border: 1px solid #f0f0f0; background: #fff; }
.note-badge svg { width: 13px; height: 12px; }
.pointer { position: absolute; left: 128px; top: 224px; display: flex; }
.pointer svg { width: 7px; height: 14px; }
.pointer span { margin: 12px 0 0 1px; padding: 0 3px; background: #d9645c; color: #fff; font-size: 9px; line-height: 13px; }
.legend { position: absolute; left: 535px; top: 277px; width: 136px; height: 164px; border: 1px solid #c2c2c2; border-spacing: 0; color: #737577; text-align: center; font-size: 11px; line-height: 16px; white-space: nowrap; table-layout: fixed; }
.legend th, .legend td { height: 20px; padding: 0; }
.legend th { padding-right: 8px; }
.legend td:first-child { padding-left: 4px; }
.legend td:last-child { padding-right: 8px; }
.scroll-x { position: absolute; left: 180px; bottom: 1px; width: 292px; height: 5px; border-radius: 3px; background: #c5c8ce; }
.scroll-y { position: absolute; right: 1px; top: 157px; width: 5px; height: 153px; border-radius: 3px; background: rgba(150, 155, 165, .5); }

.thread { display: flex; flex-direction: column; background: #f2f3f5; color: #282c33; font-family: "Noto Sans CJK SC", "Open Sans", sans-serif; }
.popup { position: absolute; left: 254px; top: 92px; width: 180px; box-shadow: 0 1px 3px rgba(0, 0, 0, .6); }
.side { min-height: 0; }
.thread-head { display: flex; align-items: center; justify-content: space-between; flex: none; height: 23px; padding: 0 12px 0 9px; background: #6f7681; color: #fff; }
.thread-head button { gap: 4px; }
.thread-head svg { width: 11px; height: 11px; }
.thread-head .dismiss svg { width: 13px; height: 13px; }
.thread-bar { display: flex; align-items: center; justify-content: space-between; flex: none; height: 29px; padding: 0 11px 0 12px; border-bottom: 1px solid #e2e4e8; }
.thread-bar svg { color: #5d646f; }
.thread-bar button { color: #2d72e0; }
.thread-list { position: relative; display: flex; flex-direction: column; gap: 9px; padding: 2px 11px 11px; }
.side .thread-list { flex: 1; padding: 10px 9px 0 11px; }
.side .thread-bar { padding-right: 9px; }
.thread-list article { display: flex; position: relative; padding: 5px 12px 3px 5px; border: 1px solid #e3e5e9; border-radius: 2px; background: #fff; }
.avatar { flex: none; width: 18px; height: 18px; margin-right: 5px; border-radius: 50%; background: #6f7681; color: #fff; text-align: center; font-size: 8px; line-height: 18px; font-weight: 500; }
.thread-list h4 { line-height: 18px; font-weight: 700; }
.thread-list p { font-size: 8px; line-height: 12px; }
.thread-list b { font-weight: 400; color: #e8554d; }
.thread-list time { display: block; font-size: 7px; line-height: 14px; }
.thread-list article button { position: absolute; right: 9px; top: 8px; }
.thread-list article button svg { width: 11px; height: 12px; }
.thread-scroll { position: absolute; right: 1px; top: 9px; bottom: 1px; width: 5px; border-radius: 3px; background: #c3c7d0; }
.compose { display: flex; flex-direction: column; align-items: flex-end; gap: 7px; flex: none; padding: 7px; background: #dfe2e8; }
.field { position: relative; align-self: stretch; height: 31px; border: 1px solid #c4c8d0; border-radius: 2px; background: #fff; }
.field.active { border-color: #6b9ae6; }
.active::before { content: ""; position: absolute; left: 7px; top: 4px; width: 1px; height: 11px; background: #282c33; }
.field textarea { display: block; width: 100%; height: 29px; padding: 4px 7px 0; border: 0; outline: 0; resize: none; overflow: hidden; background: none; font-size: 8px; line-height: 11px; }
.field textarea::placeholder { color: #8d929b; }
.compose button { width: 69px; height: 23px; border-radius: 2px; background: #2d72e0; color: #fff; font-weight: 700; }
.side .compose { padding: 9px 4px 7px 7px; }

.dock { display: flex; flex-direction: column; border-left: 1px solid #c3c7cf; background: #dfe2e8; }
.dock button { height: 36px; flex: none; }
.dock svg { width: 15px; height: 15px; }
.dock .collapse { height: 21px; color: #6f7681; }
.dock .collapse svg { width: 12px; height: 12px; }
.dock .current { background: #f2f3f5; }

.bottom { display: flex; align-items: center; flex: none; height: 23px; padding: 0 6px 0 67px; background: #6f7681; color: #fff; }
.bottom .list { width: 28px; }
.tab { align-self: flex-start; width: 131px; height: 20px; margin-left: 5px; gap: 7px; border-radius: 0 0 2px 2px; background: #292c34; }
.tab svg, .percent svg { width: 6px; height: 6px; }
.add { margin: 0 auto 0 4px; }
.bottom .bar { margin-right: 4px; height: 17px; }
.thin { width: 20px; }
.thin svg { width: 11px; height: 11px; }
.bottom input { appearance: none; width: 97px; height: 12px; margin: 0 4px 0 3px; background: linear-gradient(#b4b8bf, #b4b8bf) center / 100% 2px no-repeat; }
.bottom input::-webkit-slider-thumb { appearance: none; width: 8px; height: 8px; border-radius: 50%; background: #4b8ff0; }
.percent { gap: 4px; }
</style>
